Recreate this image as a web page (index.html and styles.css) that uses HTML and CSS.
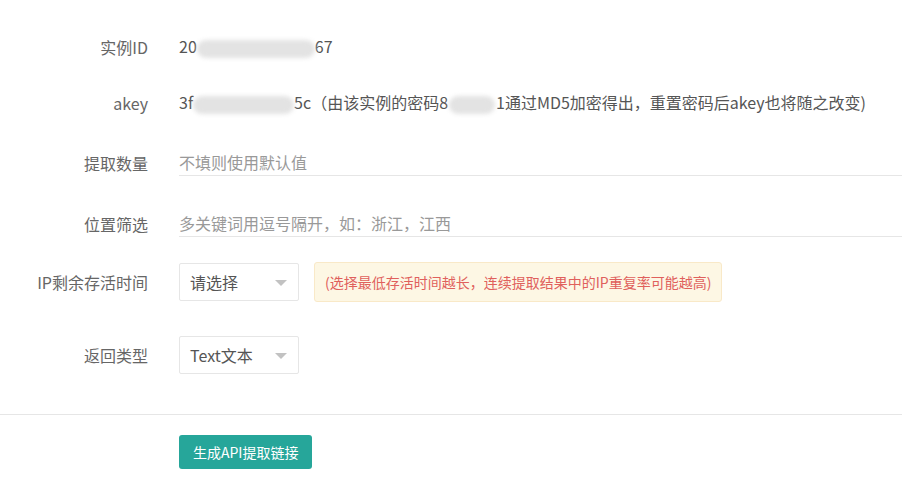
FILE: index.html
```html
<!DOCTYPE html>
<html lang="zh-CN">
<head>
    <meta charset="UTF-8">
    <title>API提取</title>
    <link rel="stylesheet" href="styles.css">
</head>
<body>
    <div class="form">
        <div class="form-item row-id">
            <label class="form-label">实例ID</label>
            <div class="form-block text">20<span class="mask mask-id"></span>67</div>
        </div>
        <div class="form-item row-akey">
            <label class="form-label">akey</label>
            <div class="form-block text">3f<span class="mask mask-key"></span>5c（由该实例的密码8<span class="mask mask-pwd"></span>1通过MD5加密得出，重置密码后akey也将随之改变)</div>
        </div>
        <div class="form-item row-num">
            <label class="form-label">提取数量</label>
            <div class="form-block">
                <input type="text" class="line-input" placeholder="不填则使用默认值">
            </div>
        </div>
        <div class="form-item row-area">
            <label class="form-label">位置筛选</label>
            <div class="form-block">
                <input type="text" class="line-input" placeholder="多关键词用逗号隔开，如：浙江，江西">
            </div>
        </div>
        <div class="form-item row-time">
            <label class="form-label">IP剩余存活时间</label>
            <div class="form-block inline">
                <div class="select">请选择<i class="caret"></i></div>
                <div class="tip">(选择最低存活时间越长，连续提取结果中的IP重复率可能越高)</div>
            </div>
        </div>
        <div class="form-item row-type">
            <label class="form-label">返回类型</label>
            <div class="form-block inline">
                <div class="select">Text文本<i class="caret"></i></div>
            </div>
        </div>
    </div>
    <hr class="divider">
    <div class="actions">
        <button class="btn">生成API提取链接</button>
    </div>
</body>
</html>
```

FILE: styles.css
```css
body {
    margin: 0;
    background: #fff;
    font-family: "Microsoft YaHei", "Noto Sans CJK SC", "Noto Sans", sans-serif;
    font-size: 16px;
    color: #555;
}
.form {
    padding-top: 27px;
}
.form-item {
    display: flex;
    align-items: center;
}
.form-label {
    width: 148px;
    padding-right: 31px;
    text-align: right;
    color: #666;
    flex-shrink: 0;
    line-height: 20px;
}
.form-block {
    flex: 1;
}
.form-block.inline {
    display: flex;
    align-items: center;
}
.text {
    line-height: 20px;
    color: #555;
    white-space: nowrap;
}
.row-id { height: 40px; }
.row-akey { height: 40px; margin-top: 16px; }
.row-num { margin-top: 26px; }
.row-area { margin-top: 34px; }
.row-time { margin-top: 25px; }
.row-type { margin-top: 34px; }

.mask {
    display: inline-block;
    height: 18px;
    vertical-align: middle;
    background: #e3e3e3;
    border-radius: 9px;
    filter: blur(2px);
}
.mask-id { width: 118px; }
.mask-key { width: 101px; }
.mask-pwd { width: 46px; margin: 0 1px; }

.line-input {
    display: block;
    width: 100%;
    box-sizing: border-box;
    height: 27px;
    padding: 0;
    border: none;
    border-bottom: 1px solid #e6e6e6;
    outline: none;
    font: inherit;
    font-size: 16px;
    color: #555;
    background: transparent;
}
.line-input::placeholder {
    color: #999;
}
.select {
    position: relative;
    width: 120px;
    height: 38px;
    box-sizing: border-box;
    border: 1px solid #e6e6e6;
    border-radius: 2px;
    padding-left: 10px;
    line-height: 36px;
    color: #555;
    flex-shrink: 0;
}
.caret {
    position: absolute;
    right: 11px;
    top: 16px;
    width: 0;
    height: 0;
    border-left: 6px solid transparent;
    border-right: 6px solid transparent;
    border-top: 6px solid #c2c2c2;
}
.tip {
    margin-left: 15px;
    height: 40px;
    box-sizing: border-box;
    padding: 0 10px;
    line-height: 38px;
    font-size: 14px;
    color: #e0605c;
    background: #fdf7e4;
    border: 1px solid #f9e9c8;
    border-radius: 3px;
    white-space: nowrap;
}
.divider {
    margin: 40px 0 0;
    border: none;
    border-top: 1px solid #e6e6e6;
}
.actions {
    padding: 20px 0 0 179px;
}
.btn {
    height: 34px;
    padding: 0 14px;
    border: none;
    border-radius: 3px;
    background: #26a69a;
    color: #fff;
    font: inherit;
    font-size: 14px;
    cursor: pointer;
}
```
